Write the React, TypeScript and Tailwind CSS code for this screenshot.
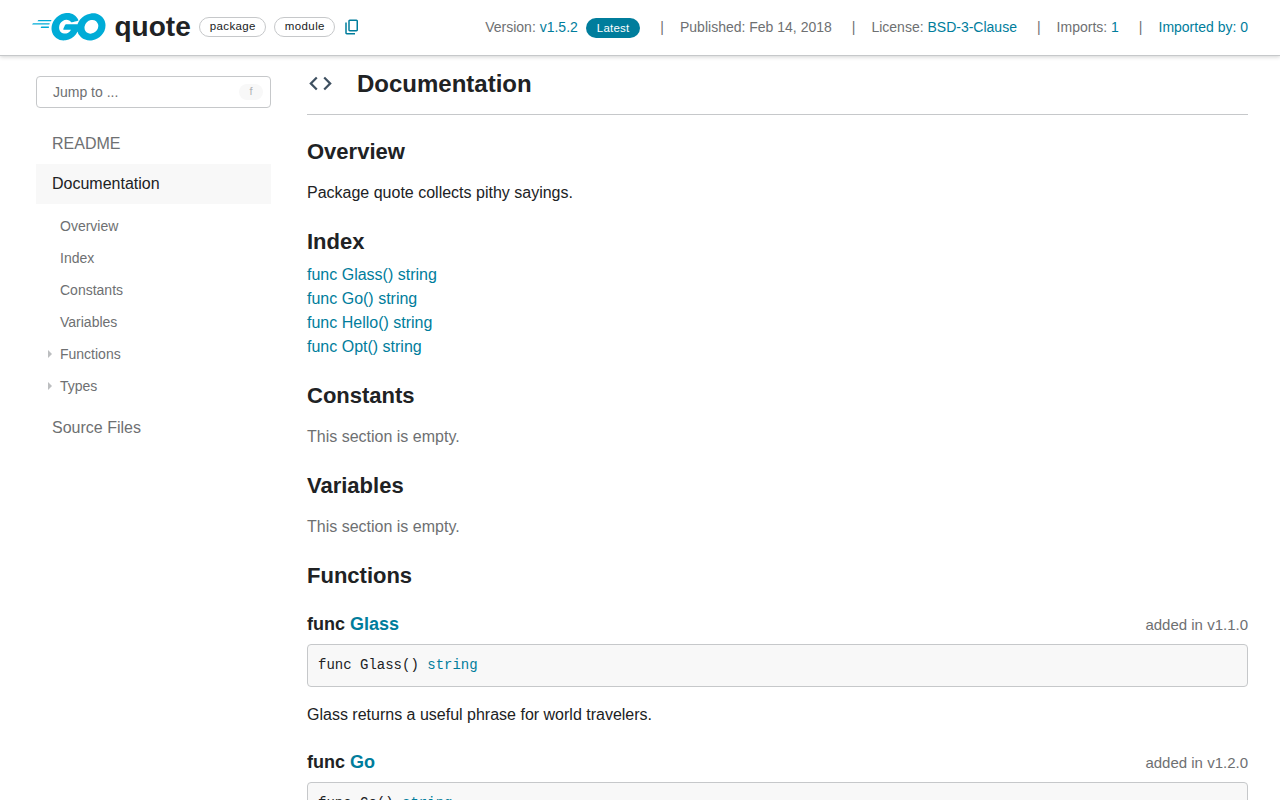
import type { ReactNode } from 'react';
import { SiGo } from 'react-icons/si';
import { MdCode } from 'react-icons/md';

const Link = ({ children }: { children: ReactNode }) => (
  <a href="#" className="text-[#007d9c]">{children}</a>
);

const CopyIcon = () => (
  <svg viewBox="0 0 24 24" className="ml-2 size-[18px] shrink-0 fill-[#007d9c]">
    <path d="M9 18q-.825 0-1.412-.587Q7 16.825 7 16V4q0-.825.588-1.413Q8.175 2 9 2h9q.825 0 1.413.587Q20 3.175 20 4v12q0 .825-.587 1.413Q18.825 18 18 18Zm0-2h9V4H9v12Zm-4 6q-.825 0-1.413-.587Q3 20.825 3 20V6h2v14h11v2Z" />
  </svg>
);

const Chip = ({ children }: { children: ReactNode }) => (
  <span className="flex h-5 items-center rounded-full border border-[#c6c8ca] pl-[9.5px] pr-[9.5px] text-[11.5px] tracking-[0.38px] text-[#202224]">
    {children}
  </span>
);

const Divider = () => <span className="ml-5 mr-4">|</span>;

const Header = () => (
  <header className="relative z-10 flex h-14 items-center border-b border-[#c6c8ca] bg-white pb-px pl-8 pr-8 shadow-[0_1px_4px_rgba(32,34,36,0.2)]">
    <SiGo className="size-[73.5px] shrink-0 text-[#00acd7]" />
    <h1 className="ml-[9px] mr-[8.5px] text-[28px] font-bold leading-8">quote</h1>
    <div className="flex items-center gap-2">
      <Chip>package</Chip>
      <Chip>module</Chip>
    </div>
    <CopyIcon />
    <div className="ml-auto flex items-center whitespace-nowrap text-sm text-[#6e7072]">
      <span>Version: <Link>v1.5.2</Link></span>
      <span className="ml-2 flex h-5 translate-y-px items-center rounded-full bg-[#007d9c] px-[11px] text-[11.5px] tracking-[0.2px] text-white">Latest</span>
      <Divider />
      <span>Published: Feb 14, 2018</span>
      <Divider />
      <span>License: <Link>BSD-3-Clause</Link></span>
      <Divider />
      <span>Imports: <Link>1</Link></span>
      <Divider />
      <Link>Imported by: 0</Link>
    </div>
  </header>
);

const sections = [
  { name: 'Overview', nested: false },
  { name: 'Index', nested: false },
  { name: 'Constants', nested: false },
  { name: 'Variables', nested: false },
  { name: 'Functions', nested: true },
  { name: 'Types', nested: true },
];

const Sidebar = () => (
  <nav className="ml-9 w-[235px] shrink-0 pt-5 text-[#6e7072]">
    <div className="mb-4 flex h-8 items-center justify-between rounded border border-[#c6c8ca] pl-4 pr-[7px] text-sm">
      <span>Jump to ...</span>
      <span className="flex h-4 w-6 items-center justify-center rounded-full bg-[#f8f8f8] text-[11px] text-[#b0b2b4]">f</span>
    </div>
    <div className="flex h-10 items-center px-4">README</div>
    <div className="flex h-10 items-center bg-[#f8f8f8] px-4 text-[#202224]">Documentation</div>
    <ul className="my-1.5 text-sm">
      {sections.map((s) => (
        <li key={s.name} className="flex h-8 items-center pl-3">
          <span className="flex w-3 items-center">
            {s.nested && (
              <svg viewBox="0 0 4 8" className="h-2 w-1 fill-[#bcbec0]"><path d="M0 0l4 4-4 4z" /></svg>
            )}
          </span>
          {s.name}
        </li>
      ))}
    </ul>
    <div className="flex h-10 items-center px-4">Source Files</div>
  </nav>
);

const Title = ({ children }: { children: ReactNode }) => (
  <h3 className="text-[22px] font-bold leading-7">{children}</h3>
);

const index = ['Glass', 'Go', 'Hello', 'Opt'];

const functions = [
  { name: 'Glass', version: 'v1.1.0', text: 'Glass returns a useful phrase for world travelers.' },
  { name: 'Go', version: 'v1.2.0', text: '' },
];

const Content = () => (
  <main className="ml-9 mr-8 min-w-0 flex-1">
    <h2 className="flex h-[59px] items-center border-b border-[#c6c8ca] pb-0.5 text-2xl font-bold">
      <MdCode className="mb-0.5 size-[27px] text-[#3e5060]" />
      <span className="ml-[23px]">Documentation</span>
    </h2>
    <div className="pt-[23px]">
      <Title>Overview</Title>
      <p className="mt-[15px] leading-6">Package quote collects pithy sayings.</p>
    </div>
    <div className="mt-[23px]">
      <Title>Index</Title>
      <ul className="mt-[7px]">
        {index.map((n) => (
          <li key={n} className="leading-6"><Link>func {n}() string</Link></li>
        ))}
      </ul>
    </div>
    {['Constants', 'Variables'].map((n) => (
      <div key={n} className="mt-[23px]">
        <Title>{n}</Title>
        <p className="mt-[15px] leading-6 text-[#6e7072]">This section is empty.</p>
      </div>
    ))}
    <div className="mt-[23px]">
      <Title>Functions</Title>
      <div className="mt-5 flex flex-col gap-[21px]">
        {functions.map((f) => (
          <section key={f.name}>
            <h4 className="flex h-7 items-center justify-between text-lg font-bold">
              <span>func <Link>{f.name}</Link></span>
              <span className="pt-0.5 text-[15px] font-normal text-[#6e7072]">added in {f.version}</span>
            </h4>
            <pre className="mt-1.5 h-[43px] rounded border border-[#c6c8ca] bg-[#f8f8f8] px-2.5 py-2.5 font-['Liberation_Mono',monospace] text-sm">
              func {f.name}() <Link>string</Link>
            </pre>
            {f.text && <p className="mt-4 leading-6">{f.text}</p>}
          </section>
        ))}
      </div>
    </div>
  </main>
);

export default function App() {
  return (
    <div className="flex h-screen flex-col overflow-hidden bg-white font-['Liberation_Sans',Arial,sans-serif] text-base text-[#202224]">
      <Header />
      <div className="flex min-h-0 flex-1">
        <Sidebar />
        <Content />
      </div>
    </div>
  );
}
